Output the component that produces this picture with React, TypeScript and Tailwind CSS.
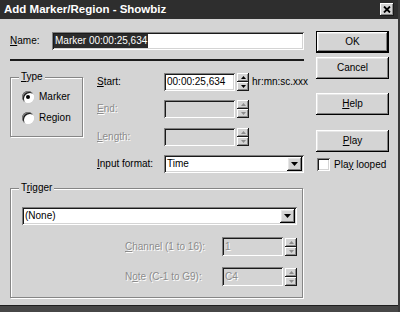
const raised =
  "bg-[#d4d4d4] shadow-[inset_-1px_-1px_0_#000,inset_1px_1px_0_#fff,inset_-2px_-2px_0_#808080,inset_2px_2px_0_#e6e6e6]";
const raisedThin =
  "bg-[#d4d4d4] shadow-[inset_-1px_-1px_0_#1a1a1a,inset_1px_1px_0_#fff,inset_-2px_-2px_0_#8a8a8a]";
const sunken =
  "shadow-[inset_1px_1px_0_#808080,inset_-1px_-1px_0_#fff,inset_2px_2px_0_#1a1a1a,inset_-2px_-2px_0_#d4d4d4]";
const etched = "border border-[#868686] shadow-[inset_1px_1px_0_#fff,1px_1px_0_#fff]";
const dim = "text-[#8c8c8c] [text-shadow:1px_1px_0_#fff]";

function Arrow({ up, disabled }: { up?: boolean; disabled?: boolean }) {
  return (
    <svg width="5" height="3" viewBox="0 0 5 3">
      <path d={up ? "M2.5 0L5 3H0z" : "M0 0H5L2.5 3z"} fill={disabled ? "#8c8c8c" : "#000"} />
    </svg>
  );
}

function Spin({ disabled }: { disabled?: boolean }) {
  return (
    <div className="w-[12px] h-[18px] flex flex-col shrink-0">
      <div className={`h-[9px] ${raisedThin} flex items-center justify-center`}>
        <Arrow up disabled={disabled} />
      </div>
      <div className={`h-[9px] ${raisedThin} flex items-center justify-center`}>
        <Arrow disabled={disabled} />
      </div>
    </div>
  );
}

function Combo({ value, width }: { value: string; width: string }) {
  return (
    <div className={`${width} h-[18px] shrink-0 bg-white ${sunken} flex items-center pl-[3px] pr-[2px]`}>
      <span className="flex-1">{value}</span>
      <div className={`w-[15px] h-[14px] ${raised} flex items-center justify-center`}>
        <svg width="7" height="4" viewBox="0 0 7 4">
          <path d="M0 0H7L3.5 4z" fill="#000" />
        </svg>
      </div>
    </div>
  );
}

function Radio({ checked, label }: { checked?: boolean; label: string }) {
  return (
    <div className="flex items-center h-[12px]">
      <div className="w-[12px] h-[12px] shrink-0 rounded-full bg-white shadow-[inset_1px_1px_0_#808080,inset_-1px_-1px_0_#fff,inset_2px_2px_0_#1a1a1a] flex items-center justify-center">
        {checked && <div className="w-[4px] h-[4px] rounded-full bg-black" />}
      </div>
      <span className="ml-[5px]">{label}</span>
    </div>
  );
}

function Field({
  label,
  value,
  disabled,
  extra,
}: {
  label: React.ReactNode;
  value: string;
  disabled?: boolean;
  extra?: string;
}) {
  return (
    <div className="flex items-center h-[18px] whitespace-nowrap">
      <span className={`w-[67px] shrink-0 ${disabled ? dim : ""}`}>{label}</span>
      <div
        className={`w-[71px] h-[18px] shrink-0 ${disabled ? "bg-[#d4d4d4]" : "bg-white"} ${sunken} flex items-center pl-[3px]`}
      >
        {value}
      </div>
      <div className="ml-[2px] shrink-0">
        <Spin disabled={disabled} />
      </div>
      {extra && <span className="ml-[3px] shrink-0">{extra}</span>}
    </div>
  );
}

function Button({ children, def }: { children: React.ReactNode; def?: boolean }) {
  if (def)
    return (
      <div className="w-[73px] h-[22px] border border-black">
        <div className={`w-full h-full ${raised} flex items-center justify-center`}>{children}</div>
      </div>
    );
  return <div className={`w-[73px] h-[22px] ${raised} flex items-center justify-center`}>{children}</div>;
}

export default function App() {
  return (
    <div className="w-[400px] h-[312px] bg-[#d4d4d4] flex flex-col font-['Liberation_Sans',Arial,sans-serif] text-[10px] text-black leading-none border-r-2 border-[#3a3a3a] overflow-hidden">
      <div className="h-[19px] bg-[#2e2e2e] flex items-center justify-between pl-[4px] pr-[4px] shrink-0">
        <span className="text-white font-bold text-[11.5px]">Add Marker/Region - Showbiz</span>
        <div className={`w-[14px] h-[13px] ${raisedThin} flex items-center justify-center`}>
          <svg width="8" height="7" viewBox="0 0 8 7">
            <path d="M1 0.5L7 6.5M7 0.5L1 6.5" stroke="#000" strokeWidth="1.8" />
          </svg>
        </div>
      </div>

      <div className="flex-1 flex pl-[10px]">
        <div className="w-[294px] shrink-0 pt-[13px] flex flex-col">
          <div className="flex items-center h-[18px]">
            <span className="w-[42px] shrink-0">
              <span className="underline underline-offset-1">N</span>ame:
            </span>
            <div className={`w-[252px] h-[18px] shrink-0 bg-white ${sunken} flex items-center pl-[2px]`}>
              <span className="bg-[#2b2b2b] text-white px-[1px] py-[2px]">Marker 00:00:25,634</span>
            </div>
          </div>

          <div className="mt-[9px] h-[2px] bg-[#1c1c1c]" />

          <div className="flex mt-[12px]">
            <div
              className={`relative shrink-0 mt-[4px] w-[73px] h-[60px] ${etched} pt-[13px] pl-[11px] flex flex-col gap-[9px]`}
            >
              <span className="absolute -top-[6px] left-[8px] px-[2px] bg-[#d4d4d4]">
                <span className="underline underline-offset-1">T</span>ype
              </span>
              <Radio checked label="Marker" />
              <Radio label="Region" />
            </div>

            <div className="ml-[14px] shrink-0 flex flex-col">
              <Field
                label={
                  <>
                    <span className="underline underline-offset-1">S</span>tart:
                  </>
                }
                value="00:00:25,634"
                extra="hr:mn:sc.xxx"
              />
              <div className="mt-[9px]">
                <Field
                  disabled
                  label={
                    <>
                      <span className="underline underline-offset-1">E</span>nd:
                    </>
                  }
                  value=""
                />
              </div>
              <div className="mt-[10px]">
                <Field
                  disabled
                  label={
                    <>
                      <span className="underline underline-offset-1">L</span>ength:
                    </>
                  }
                  value=""
                />
              </div>
              <div className="mt-[9px] flex items-center h-[18px]">
                <span className="w-[67px] shrink-0">
                  <span className="underline underline-offset-1">I</span>nput format:
                </span>
                <Combo value="Time" width="w-[140px]" />
              </div>
            </div>
          </div>

          <div
            className={`relative shrink-0 mt-[15px] w-[293px] h-[110px] ${etched} pt-[18px] pl-[11px] flex flex-col`}
          >
            <span className="absolute -top-[6px] left-[8px] px-[2px] bg-[#d4d4d4]">
              T<span className="underline underline-offset-1">r</span>igger
            </span>
            <Combo value="(None)" width="w-[275px]" />
            <div className="mt-[12px] flex items-center h-[19px] pl-[103px]">
              <span className={`w-[97px] shrink-0 ${dim}`}>
                <span className="underline underline-offset-1">C</span>hannel (1 to 16):
              </span>
              <div className={`w-[61px] h-[19px] shrink-0 bg-[#d4d4d4] ${sunken} flex items-center pl-[3px] ${dim}`}>
                1
              </div>
              <div className="ml-[2px]">
                <Spin disabled />
              </div>
            </div>
            <div className="mt-[11px] flex items-center h-[19px] pl-[103px]">
              <span className={`w-[97px] shrink-0 ${dim}`}>
                N<span className="underline underline-offset-1">o</span>te (C-1 to G9):
              </span>
              <div className={`w-[61px] h-[19px] shrink-0 bg-[#d4d4d4] ${sunken} flex items-center pl-[3px] ${dim}`}>
                C4
              </div>
              <div className="ml-[2px]">
                <Spin disabled />
              </div>
            </div>
          </div>
        </div>

        <div className="ml-[12px] w-[73px] shrink-0 pt-[12px] flex flex-col">
          <Button def>OK</Button>
          <div className="mt-[4px]">
            <Button>Cancel</Button>
          </div>
          <div className="mt-[14px]">
            <Button>
              <span className="underline underline-offset-1">H</span>elp
            </Button>
          </div>
          <div className="mt-[15px]">
            <Button>
              <span className="underline underline-offset-1">P</span>lay
            </Button>
          </div>
          <div className="mt-[6px] flex items-center h-[13px] pl-[1px] whitespace-nowrap">
            <div className={`w-[13px] h-[13px] shrink-0 bg-white ${sunken}`} />
            <span className="ml-[4px]">
              Pla<span className="underline underline-offset-1">y</span> looped
            </span>
          </div>
        </div>
      </div>

      <div className="h-[7px] bg-[#474747] border-t border-[#1e1e1e] shrink-0" />
    </div>
  );
}
